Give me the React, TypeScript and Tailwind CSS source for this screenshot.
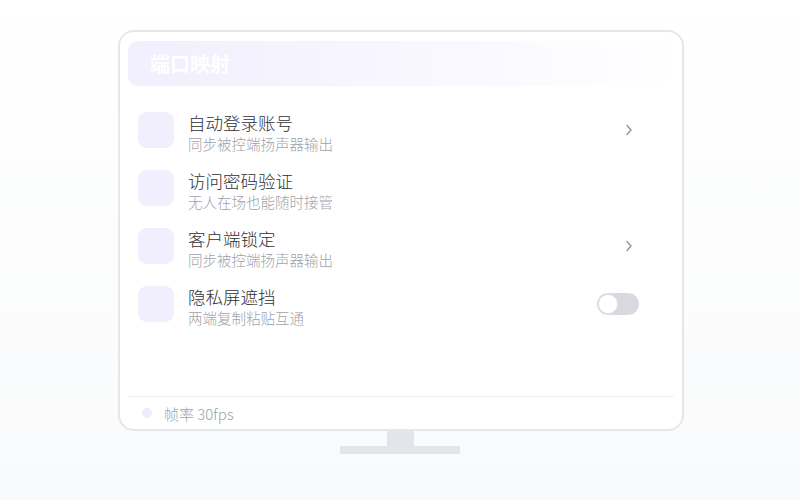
import React from "react";

const items = [
  { title: "自动登录账号", sub: "同步被控端扬声器输出", right: "chevron" },
  { title: "访问密码验证", sub: "无人在场也能随时接管", right: "none" },
  { title: "客户端锁定", sub: "同步被控端扬声器输出", right: "chevron" },
  { title: "隐私屏遮挡", sub: "两端复制粘贴互通", right: "toggle" },
];

function Chevron() {
  return (
    <svg width="8" height="12" viewBox="0 0 8 12" fill="none">
      <path d="M2 1.5 L6 6 L2 10.5" stroke="#8b9099" strokeWidth="1.3" strokeLinecap="round" strokeLinejoin="round" />
    </svg>
  );
}

export default function App() {
  return (
    <div
      className="w-[800px] h-[500px] bg-gradient-to-b from-white to-[#f9fafb] flex flex-col items-center pt-[30px]"
      style={{ fontFamily: '"Noto Sans CJK SC", "Noto Sans", sans-serif' }}
    >
      <div className="w-[566px] h-[401px] ml-[2px] border-2 border-[#e5e7eb] rounded-[16px] bg-white pt-[9px] px-[8px] flex flex-col">
        <div className="h-[45px] rounded-[10px] bg-gradient-to-r from-[#f2effe] via-[#f8f6ff] to-white flex items-center justify-between pl-[22px] pr-[18px]">
          <span className="text-[20px] font-bold text-white leading-none">端口映射</span>
          <div className="flex gap-[8px] items-center">
            <span className="w-[6px] h-[6px] rounded-full bg-white" />
            <span className="w-[6px] h-[6px] rounded-full bg-white" />
            <span className="w-[6px] h-[6px] rounded-full bg-white" />
          </div>
        </div>
        <div className="flex flex-col pl-[10px] pr-[35px] pt-[26px] gap-[16px] flex-1">
          {items.map((it) => (
            <div key={it.title} className="flex items-start">
              <div className="w-[36px] h-[36px] rounded-[9px] bg-[#f1eefd] shrink-0" />
              <div className="ml-[14px] flex flex-col flex-1">
                <span className="text-[17.5px] leading-[22px] font-light text-[#2f3033]">{it.title}</span>
                <span className="text-[14.5px] leading-[20px] font-light text-[#9ea2aa]">{it.sub}</span>
              </div>
              <div className="h-[36px] flex items-center justify-end">
                {it.right === "chevron" && (
                  <div className="pr-[6px]">
                    <Chevron />
                  </div>
                )}
                {it.right === "toggle" && (
                  <div className="w-[42px] h-[22px] rounded-full bg-[#d8dadf] flex items-center pl-[1px]">
                    <div className="w-[20px] h-[20px] rounded-full bg-white border border-[#e3e5e9]" />
                  </div>
                )}
              </div>
            </div>
          ))}
        </div>
        <div className="border-t border-[#eef0f3] h-[33px] flex items-center pl-[14px] gap-[12px]">
          <span className="w-[10px] h-[10px] rounded-full bg-[#efecfd]" />
          <span className="text-[15px] font-light text-[#9ea2aa] leading-none">帧率 30fps</span>
        </div>
      </div>
      <div className="w-[27px] h-[15px] bg-[#e2e5e9]" />
      <div className="w-[120px] h-[8px] bg-[#e2e5e9]" />
    </div>
  );
}
